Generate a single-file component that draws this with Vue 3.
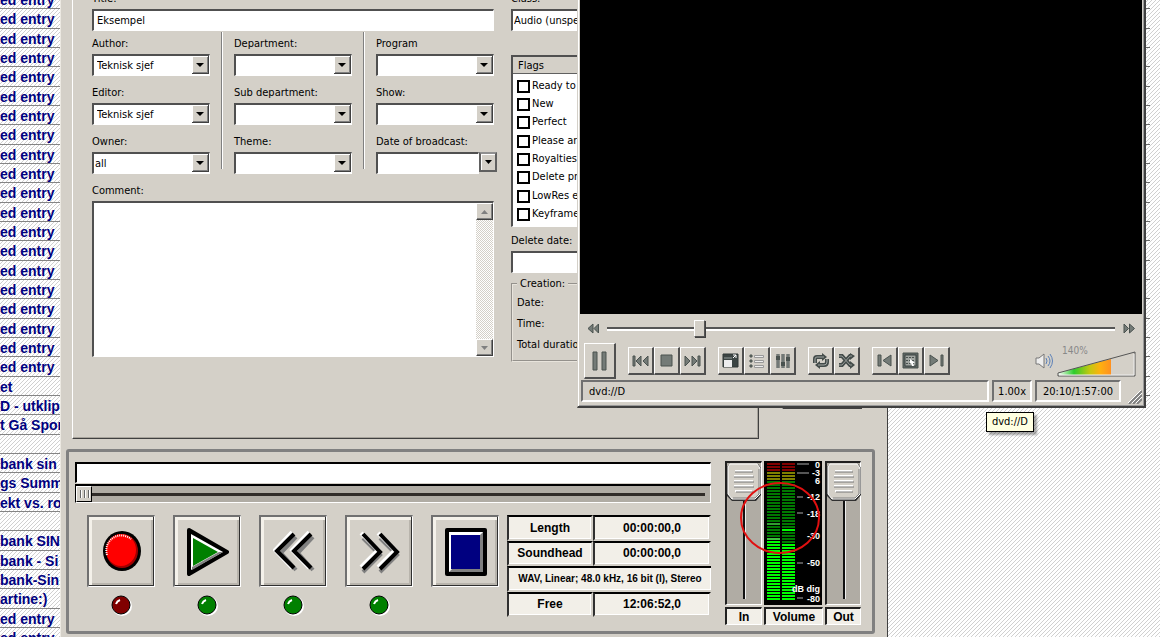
<script setup>
import { ref } from 'vue'

const entries = [
  ...Array(20).fill('ed entry'),
  'et', 'D - utklip', 't Gå Spor', '', 'bank sin', 'gs Summ', 'ekt vs. ros', '',
  'bank SIN', 'bank - Si', 'bank-Sin', 'artine:)', 'ed entry', 'ed entry',
]

const title = ref('Eksempel')
const comment = ref('')
const columns = [
  [
    { id: 'author', label: 'Author:', value: 'Teknisk sjef' },
    { id: 'editor', label: 'Editor:', value: 'Teknisk sjef' },
    { id: 'owner', label: 'Owner:', value: 'all', tight: true },
  ],
  [
    { id: 'department', label: 'Department:', value: '' },
    { id: 'subdepartment', label: 'Sub department:', value: '' },
    { id: 'theme', label: 'Theme:', value: '' },
  ],
  [
    { id: 'program', label: 'Program', value: '' },
    { id: 'show', label: 'Show:', value: '' },
    { id: 'broadcast', label: 'Date of broadcast:', value: '', date: true },
  ],
]
const flags = ['Ready to air', 'New', 'Perfect', 'Please archive', 'Royalties', 'Delete protected', 'LowRes exists', 'Keyframes']

const leds = ['#800000', '#008000', '#008000', '#008000']
const transport = ['Record', 'Play', 'Rewind', 'Forward', 'Stop']

const scale = [
  { t: '0', y: 7 }, { t: '-3', y: 15 }, { t: '6', y: 23 }, { t: '-12', y: 39 }, { t: '-18', y: 56 },
  { t: '-30', y: 78 }, { t: '-50', y: 105 }, { t: 'dB dig', y: 131 }, { t: '-80', y: 141 },
]
const ticks = [3, 12, 36, 52, 102, 137]
const bars = []
for (let y = 2; y < 139; y += 3) {
  const base = y < 10 ? '#800000' : y < 19 ? '#808000' : '#007800'
  bars.push({ y, left: y > 76 ? (y < 80 ? '#40c040' : '#00ff00') : y === 62 ? '#30a030' : base, right: y > 80 || y === 68 ? '#00ff00' : base })
}
</script>

<template>
  <div class="desktop">
    <ul class="entries">
      <li v-for="(e, i) in entries" :key="i">{{ e }}</li>
    </ul>

    <main class="editor">
      <div class="upper">
        <form class="panel" @submit.prevent>
          <div class="details">
            <div class="field">
              <label for="title">Title:</label>
              <input id="title" v-model="title" class="sunk" type="text" />
            </div>
            <div class="columns">
              <template v-for="(col, c) in columns" :key="c">
                <i v-if="c" class="rule"></i>
                <div class="column">
                  <div v-for="f in col" :key="f.id" class="field">
                    <label :for="f.id">{{ f.label }}</label>
                    <div v-if="f.date" class="date">
                      <input :id="f.id" class="sunk" type="text" />
                      <button type="button" aria-label="Pick date">
                        <svg width="7" height="4"><path d="M0 0h7L3.500 4z" /></svg>
                      </button>
                    </div>
                    <div v-else class="combo">
                      <select :id="f.id" class="sunk" :class="{ tight: f.tight }">
                        <option>{{ f.value }}</option>
                      </select>
                      <svg class="arrow" width="17" height="18">
                        <path d="M0 0h17v18H0z" fill="#404040" />
                        <path d="M0 0h16v17H0z" fill="#fff" />
                        <path d="M1 1h15v16H1z" fill="#808080" />
                        <path d="M1 1h14v15H1z" fill="#d4d0c8" />
                        <path d="M4 7h8L8 11z" />
                      </svg>
                    </div>
                  </div>
                </div>
              </template>
            </div>
            <div class="field">
              <label for="comment">Comment:</label>
              <div class="memo sunk">
                <textarea id="comment" v-model="comment"></textarea>
                <div class="scrollbar">
                  <button type="button" aria-label="Scroll up"><svg width="7" height="4"><path d="M0 4h7L3.500 0z" fill="#808080" /></svg></button>
                  <button type="button" aria-label="Scroll down"><svg width="7" height="4"><path d="M0 0h7L3.500 4z" fill="#808080" /></svg></button>
                </div>
              </div>
            </div>
          </div>

          <div class="extra">
            <div class="field">
              <label for="class">Class:</label>
              <select id="class" class="sunk tight"><option>Audio (unspecified)</option></select>
            </div>
            <div class="flags sunk">
              <h2>Flags</h2>
              <ul>
                <li v-for="f in flags" :key="f">
                  <label><input type="checkbox" />{{ f }}</label>
                </li>
              </ul>
            </div>
            <div class="field">
              <label for="delete">Delete date:</label>
              <input id="delete" class="sunk" type="text" />
            </div>
            <fieldset>
              <legend>Creation:</legend>
              <p>Date:</p>
              <p>Time:</p>
              <p>Total duration:</p>
            </fieldset>
          </div>
        </form>
        <button class="side" type="button" aria-label="Close editor"></button>
      </div>

      <section class="recorder">
        <div class="deck">
          <input class="clip" type="text" aria-label="Clip name" />
          <input class="scrub" type="range" min="0" max="100" value="0" aria-label="Position" />
          <div class="deck-row">
            <div v-for="(name, i) in transport" :key="name" class="unit">
              <button type="button" :aria-label="name">
                <svg v-if="i === 0" width="42" height="48" viewBox="0 0 42 48">
                  <ellipse cx="21" cy="23" rx="19" ry="20" />
                  <ellipse cx="21" cy="23" rx="16" ry="17" fill="#a00000" />
                  <ellipse cx="20" cy="22" rx="15" ry="16" fill="#f00" />
                  <path d="M6 27A15 15 0 0 1 30 11" fill="none" stroke="#fff" stroke-width="2" stroke-dasharray="1 1" />
                </svg>
                <svg v-else-if="i === 1" width="42" height="48" viewBox="0 0 42 48">
                  <path d="M2 2L40 24L2 46z" stroke="#000" stroke-width="4" stroke-linejoin="round" />
                  <path d="M4 6L36 24L4 42z" fill="#fff" />
                  <path d="M5 42L36 24L32 24L5 39z" fill="#808080" />
                  <path d="M6 10L31 24L6 38z" fill="#008000" />
                </svg>
                <svg v-else-if="i === 2" width="42" height="48" viewBox="0 0 42 48" fill="none" stroke-width="4">
                  <path d="M23 9L8 25L23 42M40 9L25 25L40 42" stroke="#808080" />
                  <path d="M19 4L2 22L19 40M36 4L19 22L36 40" stroke="#fff" />
                  <path d="M21 6L4 23L21 40M38 6L21 23L38 40" stroke="#000" />
                </svg>
                <svg v-else-if="i === 3" width="42" height="48" viewBox="0 0 42 48" fill="none" stroke-width="4">
                  <path d="M4 10L21 27L4 44M21 10L38 27L21 44" stroke="#808080" />
                  <path d="M2 5L19 22L2 39M19 5L36 22L19 39" stroke="#fff" />
                  <path d="M4 6L21 24L4 41M21 6L38 24L21 41" stroke="#000" />
                </svg>
                <svg v-else width="42" height="48" viewBox="0 0 42 48">
                  <rect width="42" height="48" rx="2" />
                  <path d="M4 4h34v40H4z" fill="#808080" />
                  <path d="M4 44V4h34l-3 3v34H7z" fill="#fff" />
                  <path d="M6 7h29v34H6z" fill="#000080" />
                </svg>
              </button>
              <svg v-if="i < 4" class="led" width="22" height="23" viewBox="0 0 22 23">
                <circle cx="12" cy="12" r="10" fill="#fff" />
                <circle cx="11" cy="11" r="9" :fill="leds[i]" stroke="#000" />
                <path d="M6 10q1-3 4-4" fill="none" stroke="#fff" stroke-width="2" />
              </svg>
            </div>
            <table class="info">
              <tbody>
                <tr><th scope="row">Length</th><td>00:00:00,0</td></tr>
                <tr><th scope="row">Soundhead</th><td>00:00:00,0</td></tr>
                <tr><td class="format" colspan="2">WAV, Linear; 48.0 kHz, 16 bit (I), Stereo</td></tr>
                <tr><th scope="row">Free</th><td>12:06:52,0</td></tr>
              </tbody>
            </table>
          </div>
        </div>

        <div class="mixer">
          <div v-for="name in ['In', 'Out']" :key="name" class="channel" :class="name.toLowerCase()">
            <div class="fader">
              <svg width="34" height="141" viewBox="0 0 34 141">
                <path d="M16 36h2v100h-2z" fill="#111" />
                <path d="M18 36h1v100h-1z" fill="#eee" />
                <path d="M3 1h28l3 4v27l-5 6H5l-5-5V4z" fill="#303030" />
                <path d="M3 1h27l3 4v26l-5 5H5l-4-5V4z" fill="#d4d0c8" stroke="#fff" />
                <path d="M32 6v25l-4 4H6" fill="none" stroke="#808080" />
                <path d="M8 8h17M7 13h19M7 18h19M7 23h19M8 28h17" stroke="#fff" stroke-width="2" />
                <path d="M8 9h18M7 14h20M7 19h20M7 24h20M9 29h17" stroke="#777" />
              </svg>
              <input :id="'level-' + name" type="range" />
            </div>
            <label class="tag" :for="'level-' + name">{{ name }}</label>
          </div>
          <div class="channel volume">
            <svg class="meter" width="58" height="144" viewBox="0 0 58 144">
              <path d="M0 0h58v144H0z" />
              <g v-for="b in bars" :key="b.y">
                <rect x="3" :y="b.y" width="13" height="2" :fill="b.left" />
                <rect x="18" :y="b.y" width="13" height="2" :fill="b.right" />
              </g>
              <path v-for="t in ticks" :key="t" :d="`M33 ${t}h${t < 20 ? 12 : 6}`" stroke="#aaa" />
              <text v-for="s in scale" :key="s.t" x="56" :y="s.y" text-anchor="end">{{ s.t }}</text>
            </svg>
            <span class="tag">Volume</span>
          </div>
          <svg class="ring" width="82" height="74"><ellipse cx="41" cy="37" rx="39" ry="35" /></svg>
        </div>
      </section>
    </main>

    <section class="player">
      <div class="video"></div>
      <div class="seek">
        <button type="button" aria-label="Slower">
          <svg width="12" height="11"><path d="M6 1v9L1 5.500zM11.500 1v9L7 5.500z" /></svg>
        </button>
        <input type="range" min="0" max="1000" value="175" aria-label="Seek" />
        <button type="button" aria-label="Faster">
          <svg width="12" height="11"><path d="M1 1v9l4.500-4.500zM6.500 1v9l5-4.500z" /></svg>
        </button>
      </div>
      <div class="controls">
        <button class="pause" type="button" aria-label="Pause">
          <svg width="16" height="20"><path d="M1 1h4v18H1zM10 1h4v18h-4z" /></svg>
        </button>
        <div class="group">
          <button type="button" aria-label="Previous"><svg width="18" height="12"><path d="M1 1h2v10H1zM9 1v10L4 6zM16 1v10l-5-5z" /></svg></button>
          <button type="button" aria-label="Stop"><svg width="14" height="14"><path d="M1 1h11v11H1z" /></svg></button>
          <button type="button" aria-label="Next"><svg width="18" height="12"><path d="M1 1v10l5-5zM8 1v10l5-5zM14 1h2v10h-2z" /></svg></button>
        </div>
        <div class="group">
          <button type="button" aria-label="Fullscreen">
            <svg width="18" height="16"><path d="M1 1h15v13H1z" fill="#3c4543" stroke="#303836" /><path d="M2 7h8v7H2z" fill="#eee" stroke="none" /><path d="M2 4h8v2H2z" fill="#68716f" stroke="none" /><path d="M11 5l3-3M11 2h3v3" fill="none" stroke="#fff" /></svg>
          </button>
          <button type="button" aria-label="Playlist">
            <svg width="16" height="14"><path d="M5.500 1.500h9v2h-9zM5.500 6.500h9v2h-9zM5.500 11.500h9v2h-9z" fill="#eee" stroke="#999" /><path d="M1 1h2v2H1zM1 6h2v2H1zM1 11h2v2H1z" /></svg>
          </button>
          <button type="button" aria-label="Equalizer">
            <svg width="16" height="16" stroke-width="2"><path d="M3 1v14M8 1v14M13 1v14" stroke="#444c4a" stroke-width="3" /><path d="M3 1v14M8 1v14M13 1v14" stroke="#a0a5a2" stroke-width="1" /><path d="M2 4h2v2H2zM7 10h2v2H7zM12 5h2v2h-2z" /></svg>
          </button>
        </div>
        <div class="group">
          <button type="button" aria-label="Loop">
            <svg width="18" height="16"><path d="M3 10V6Q3 4 5 4H11M15 6V9Q15 12 12 12H7" fill="none" stroke="#444c4a" stroke-width="4" /><path d="M10 0l5 4l-5 4zM8 8v8L3 12z" fill="#444c4a" stroke="none" /><path d="M3 10V6Q3 4 5 4H12M15 6V9Q15 12 12 12H6" fill="none" stroke="#a0a5a2" /></svg>
          </button>
          <button type="button" aria-label="Shuffle">
            <svg width="18" height="16"><path d="M1 3h3l8 9h2M1 12h3l8-9h2" fill="none" stroke="#444c4a" stroke-width="4" /><path d="M12 0l5 3l-5 4zM12 8l5 4l-5 4z" fill="#444c4a" stroke="none" /><path d="M1 3h3l8 9h2M1 12h3l8-9h2" fill="none" stroke="#969b98" /></svg>
          </button>
        </div>
        <div class="group">
          <button type="button" aria-label="Previous chapter"><svg width="16" height="13"><path d="M1 1h3v11H1zM14 1v11L6 6.500z" /></svg></button>
          <button type="button" aria-label="Menu">
            <svg width="18" height="18"><path d="M1 1h15v15H1z" fill="#5c6462" /><path d="M3 3h11v11H3z" fill="#a2a6a2" stroke="#3c4442" /><path d="M4 5.500h9M4 8.500h9M4 11.500h9" stroke-dasharray="2 1" /><path d="M8 7l5 4h-2l1 3h-2l-1-3l-1 1z" fill="#fff" stroke="none" /></svg>
          </button>
          <button type="button" aria-label="Next chapter"><svg width="16" height="13"><path d="M12 1h2v11h-2zM1 1v11l8-5.500z" /></svg></button>
        </div>
        <svg class="speaker" width="20" height="16"><path d="M1 5h3l5-4v14l-5-4H1z" fill="#eee" stroke="#777" /><path d="M11 5q2 3 0 6M13 3q4 5 0 10M15 1q5 7 0 14" fill="none" stroke="#5b80b8" /></svg>
        <label class="loudness">
          <span>140%</span>
          <svg width="79" height="26" viewBox="0 0 79 26">
            <defs>
              <linearGradient id="heat"><stop offset="0" stop-color="#fff" /><stop offset=".3" stop-color="#2ccc2c" /><stop offset=".6" stop-color="#c4c810" /><stop offset=".8" stop-color="#ffb010" /><stop offset="1" stop-color="#ff9020" /></linearGradient>
            </defs>
            <path d="M1 24V22L54 8V24z" fill="url(#heat)" />
            <path d="M1 24V22L78 1V25H1z" fill="none" stroke="#555" />
            <path d="M2 24H77V3" fill="none" stroke="#eee" />
          </svg>
          <input type="range" max="200" value="140" />
        </label>
      </div>
      <footer class="status">
        <span class="source">dvd://D</span>
        <span>1.00x</span>
        <span class="clock">20:10/1:57:00</span>
        <svg width="14" height="14"><path d="M1 14L14 1M5 14L14 5M9 14L14 9" stroke="#808080" stroke-width="2" /><path d="M0 13L13 0M4 13L14 3M8 13L14 7" stroke="#fff" /></svg>
      </footer>
      <div class="tip" role="tooltip">dvd://D</div>
    </section>
    <div class="edge"><i v-for="n in 21" :key="n"></i></div>
  </div>
</template>

<style>
body { margin: 0; overflow: hidden; }
</style>

<style scoped>
* { box-sizing: border-box; }
ul, p, h2 { margin: 0; padding: 0; list-style: none; }
button, input, select, textarea { font: inherit; color: inherit; margin: 0; padding: 0; border-radius: 0; outline: none; }
button { display: flex; align-items: center; justify-content: center; background: #d4d0c8; }
svg { display: block; flex: none; }
.desktop {
  position: relative;
  display: flex;
  height: 100vh;
  overflow: hidden;
  color: #000;
  font: 11px/14px "DejaVu Sans Condensed", "DejaVu Sans", sans-serif;
  background: #fff url("data:image/svg+xml,%3Csvg xmlns='http://www.w3.org/2000/svg' width='4' height='4'%3E%3Cpath d='M0 3h1v1H0zM1 2h1v1H1zM2 1h1v1H2zM3 0h1v1H3z' fill='%23d0d0d0'/%3E%3C/svg%3E");
}
.entries {
  width: 60px;
  margin-top: -10px;
  overflow: hidden;
  flex: none;
  color: #000080;
  font: bold 14px/20px "Liberation Sans", Arial, sans-serif;
  white-space: nowrap;
}
.entries li { height: 19px; border-bottom: 1px solid #848484; }
.entries li:nth-child(3n + 2) { height: 20px; }

.editor {
  flex: 1;
  max-width: 828px;
  display: flex;
  flex-direction: column;
  background: #d4d0c8;
  border-left: 1px solid #ece9e2;
  border-right: 1px solid #404040;
}
.upper { flex: 1; min-height: 0; display: flex; align-items: flex-end; }
.panel {
  flex: 1;
  align-self: stretch;
  margin-left: 11px;
  padding-left: 19px;
  display: flex;
  gap: 17px;
  border-left: 1px solid #fff;
  border-right: 1px solid #404040;
  border-bottom: 1px solid #404040;
  box-shadow: inset -1px -1px #a8a49c;
}
.side { width: 80px; height: 30px; margin: 0 25px 30px 23px; border: 1px solid #404040; border-top-color: #fff; border-left-color: #fff; }
.details { width: 402px; flex: none; margin-top: -8px; }
.field { display: flex; flex-direction: column; gap: 3px; }
.field > label { height: 14px; }
.sunk {
  width: 100%;
  height: 22px;
  background: #fff;
  border: 1px solid #fff;
  border-top: 2px solid #505050;
  border-left: 2px solid #505050;
  appearance: none;
}
input.sunk, select.sunk { padding-left: 3px; }
select.sunk.tight { padding-left: 1px; }
.columns { display: flex; margin: 6px 0 10px; }
.column { flex: 1; min-width: 0; display: flex; flex-direction: column; gap: 10px; }
.rule { width: 2px; margin: -5px 11px 5px; border-left: 1px solid #808080; border-right: 1px solid #fff; }
.combo { display: grid; }
.combo > * { grid-area: 1 / 1; }
.arrow { justify-self: end; align-self: center; margin-right: 1px; pointer-events: none; }
.date { display: flex; margin-right: -3px; }
.date input { flex: 1; min-width: 0; }
.date button { width: 18px; height: 20px; border: 2px solid #606060; border-top-color: #909090; border-left-color: #606060; box-shadow: inset 1px 1px #fff; }
.memo { height: 156px; display: flex; }
.memo textarea { flex: 1; min-width: 0; border: 0; resize: none; padding: 2px; }
.scrollbar {
  width: 17px;
  display: flex;
  flex-direction: column;
  justify-content: space-between;
  background: repeating-conic-gradient(#d4d0c8 0 25%, #fff 0 50%) 0 0 / 2px 2px;
}
.scrollbar button { height: 17px; border: 1px solid #404040; border-top-color: #fff; border-left-color: #fff; box-shadow: inset -1px -1px #808080; }

.extra { flex: 1; min-width: 0; margin: -8px 17px 0 0; white-space: nowrap; }
.extra .field:first-child { margin-bottom: 24px; }
.flags { height: 172px; margin-bottom: 7px; }
.flags h2 { height: 17px; padding-left: 5px; font: inherit; line-height: 18px; background: #d4d0c8; border-bottom: 1px solid #606060; }
.flags ul { padding: 3px 0 0 4px; }
.flags li { height: 18px; }
.flags li:nth-child(3n) { height: 19px; }
.flags label { display: flex; align-items: center; gap: 2px; height: 18px; }
.flags input { width: 13px; height: 13px; appearance: none; border: 2px solid #000; background: #fff; }
fieldset { min-width: 0; margin: 4px 0 0; padding: 5px 4px 8px; border: 2px groove #e8e4dc; }
legend { height: 14px; padding: 0 3px; }
fieldset p { margin-bottom: 7px; }
fieldset p:last-child { margin: 0; }

.recorder {
  display: flex;
  gap: 14px;
  margin: 10px 12px 3px 5px;
  padding: 9px 11px 6px 6px;
  border: 3px solid #808080;
  border-radius: 3px;
  font-family: "Liberation Sans", Arial, sans-serif;
  font-weight: bold;
}
.deck { flex: 1; min-width: 0; display: flex; flex-direction: column; margin-top: 1px; }
.clip { height: 21px; border: 1px solid #fff; border-top: 2px solid #000; border-left: 2px solid #000; }
.scrub { appearance: none; width: 100%; height: 19px; margin-top: 1px; border: 1px solid #fff; border-top: 2px solid #000; border-left: 1px solid #000; background: linear-gradient(#302c28, #302c28) center 7px / calc(100% - 10px) 3px no-repeat #b0aca4; }
.scrub::-webkit-slider-thumb { appearance: none; width: 16px; height: 16px; border: 1px solid #fff; border-right-color: #000; border-bottom-color: #000; background: repeating-linear-gradient(90deg, #666 0 1px, #fff 1px 2px, #d4d0c8 2px 4px) 3px 3px / 10px 8px no-repeat #d4d0c8; }
.deck-row { display: flex; margin: 12px 0 0 12px; gap: 18px; }
.unit { width: 68px; flex: none; }
.unit button { width: 68px; height: 72px; border: 1px solid #fff; border-top: 2px solid #707070; border-left: 2px solid #707070; box-shadow: inset -1px -1px #303030, inset 3px 3px #f4f1ea, inset -3px -3px #b8b4ac; }
.led { margin: 7px auto 0; }
.info { flex: 1; height: 102px; margin-left: -10px; border-collapse: separate; border-spacing: 0; table-layout: fixed; font-size: 12px; line-height: 16px; text-align: center; }
.info th { width: 86px; }
.info th, .info td { height: 25px; padding: 0; background: #f2efe8; border: 2px solid #d4d0c8; border-top: 2px solid #000; border-left: 2px solid #303030; box-shadow: inset -1px -1px #fff; }
.info .format { border-right-width: 0; font-size: 10px; white-space: nowrap; }

.mixer { position: relative; align-self: flex-start; display: grid; grid-template-columns: 37px 59px 36px; gap: 2px; }
.channel { display: flex; flex-direction: column; gap: 2px; grid-row: 1; }
.in { grid-column: 1; }
.volume { grid-column: 2; }
.out { grid-column: 3; }
.fader { display: grid; height: 144px; background: #b0aca4; border: 1px solid #fff; border-top: 2px solid #202020; border-left: 2px solid #202020; }
.fader > * { grid-area: 1 / 1; }
.fader input { width: 100%; height: 100%; opacity: 0; }
.meter text { fill: #fff; font: bold 9px "Liberation Sans", Arial, sans-serif; }
.tag { height: 18px; background: #f2efe8; border: 1px solid #fff; border-top: 2px solid #202020; border-left: 2px solid #202020; font-size: 12px; line-height: 16px; text-align: center; }
.ring { position: absolute; left: 14px; top: 20px; fill: none; stroke: #e01010; stroke-width: 2; pointer-events: none; }

.player {
  position: absolute;
  left: 577px;
  right: 14px;
  top: 0;
  background: #d4d0c8;
  border: 2px solid #404040;
  border-top: 0;
  border-left: 1px solid #d4d0c8;
  box-shadow: inset 1px 0 #fff, inset -1px -1px #999;
}
.video { height: 314px; margin: 0 2px; background: #000; }
.seek { display: flex; align-items: center; gap: 8px; height: 29px; padding: 0 9px; }
.seek button { border: 0; padding: 0; }
.seek input { appearance: none; flex: 1; min-width: 0; height: 18px; background: linear-gradient(#555 0 2px, #fff 2px 4px) 0 7px / 100% 4px no-repeat; }
.seek input::-webkit-slider-thumb { appearance: none; width: 11px; height: 17px; background: #d4d0c8; border: 1px solid #555; border-top-color: #fff; border-left-color: #fff; box-shadow: 1px 1px #404040; }
.seek svg, .controls button svg { fill: #747b77; stroke: #4a524f; }
.controls { display: flex; align-items: center; gap: 12px; height: 36px; padding: 0 8px 0 6px; }
.controls button { width: 26px; height: 28px; border: 2px solid #505050; border-top: 1px solid #fff; border-left: 1px solid #fff; }
.controls .pause { width: 32px; height: 36px; }
.group { display: flex; }
.speaker { margin-left: auto; }
.loudness { display: grid; grid-template-columns: 79px; margin-left: -10px; color: #888; font-size: 10px; line-height: 12px; }
.loudness > * { grid-area: 1 / 1; }
.loudness span { padding-left: 5px; }
.loudness input { width: 100%; height: 100%; opacity: 0; }
.loudness svg { margin-top: 6px; }
.status { display: flex; gap: 3px; height: 27px; padding: 1px 2px 2px 3px; }
.status span { height: 22px; padding: 0 4px; border: 2px solid #fff; border-top-color: #707070; border-left-color: #707070; line-height: 19px; text-align: center; }
.status .source { flex: 1; text-align: left; padding-left: 6px; }
.status .clock { width: 86px; margin-right: 4px; }
.status svg { align-self: flex-end; }
.tip { position: absolute; right: 110px; top: 412px; padding: 1px 5px; line-height: 16px; background: #ffffe1; border: 1px solid #000; box-shadow: 3px 3px 2px #0005; }
.edge { position: absolute; right: 10px; top: -10px; width: 4px; }
.edge i { display: block; height: 19px; border-bottom: 1px solid #666; }
.edge i:nth-child(3n + 2) { height: 20px; }
</style>
